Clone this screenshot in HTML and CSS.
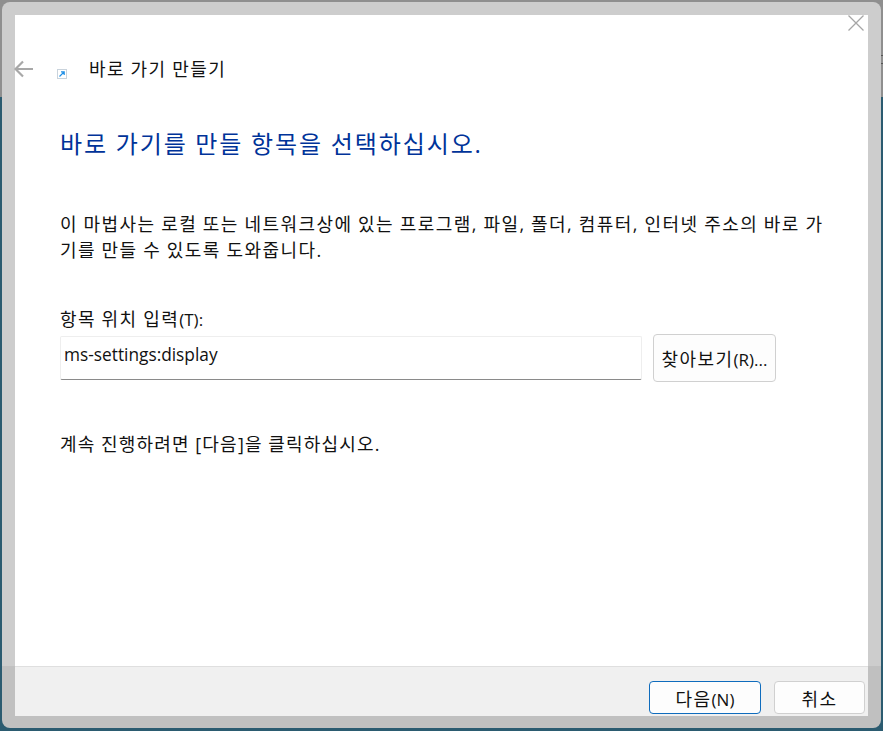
FILE: index.html
```html
<!DOCTYPE html>
<html lang="ko">
<head>
<meta charset="utf-8">
<title>바로 가기 만들기</title>
<link rel="stylesheet" href="styles.css">
</head>
<body>
<div class="frame">
  <div class="dialog">
    <button class="close" aria-label="닫기">
      <svg width="16" height="16" viewBox="0 0 16 16"><path d="M.5.5l15 15M15.5.5l-15 15" stroke="#a6a6a6" stroke-width="1.3" fill="none"/></svg>
    </button>
    <div class="titlebar">
      <svg class="back" width="19" height="18" viewBox="0 0 19 18"><path d="M19 9H1.5M9 1.5L1.5 9l7.5 7.5" stroke="#a8a8a8" stroke-width="2.2" fill="none"/></svg>
      <svg class="shortcut" width="10" height="10" viewBox="0 0 10 10"><rect x=".5" y=".5" width="9" height="9" fill="#fff" stroke="#c9d3dc"/><path d="M2.5 7.5L7 3M4 2.8h3.2V6" stroke="#1e8fe6" stroke-width="1.2" fill="none"/></svg>
      <span class="title">바로 가기 만들기</span>
    </div>
    <main class="content">
      <h1 class="heading">바로 가기를 만들 항목을 선택하십시오.</h1>
      <p class="intro">이 마법사는 로컬 또는 네트워크상에 있는 프로그램, 파일, 폴더, 컴퓨터, 인터넷 주소의 바로 가기를 만들 수 있도록 도와줍니다.</p>
      <label class="label">항목 위치 입력<span class="latin">(T):</span></label>
      <div class="field-row">
        <div class="input">ms-settings:display</div>
        <button class="btn browse">찾아보기<span class="latin">(R)...</span></button>
      </div>
      <p class="hint">계속 진행하려면 [다음]을 클릭하십시오.</p>
    </main>
    <footer class="footer">
      <button class="btn next">다음<span class="latin">(N)</span></button>
      <button class="btn cancel">취소</button>
    </footer>
  </div>
</div>
</body>
</html>
```
FILE: styles.css
```css
* { box-sizing: border-box; }
html, body { height: 100%; }
body {
  margin: 0;
  height: 731px;
  overflow: hidden;
  padding: 2px 2px 3px 2px;
  background:
    linear-gradient(transparent 55px, #555 55px, #555 56px, transparent 56px, transparent 63px, #555 63px, #555 64px, transparent 64px) right top / 2px 97px no-repeat,
    linear-gradient(#8f8f8f 0, #8f8f8f 97px, #2b5b70 97px, #2b5b70 100%);
  font-family: "Open Sans", "Noto Sans CJK KR", sans-serif;
  color: #111;
  font-size: 18px;
  letter-spacing: 1.44px;
  word-spacing: -0.5px;
}
.latin {
  font-family: "Open Sans", sans-serif;
  font-size: 17px;
  letter-spacing: 0;
  word-spacing: 0;
}
.frame {
  height: 726px;
  padding: 13px 13px 12px 13px;
  border-radius: 8px;
  background: linear-gradient(#cdcdcd 0, #cdcdcd 664px, #c0c0c0 664px, #c0c0c0 100%);
}
.dialog {
  position: relative;
  height: 701px;
  width: 853px;
  background: #fff;
  display: flex;
  flex-direction: column;
}
.close {
  position: absolute;
  top: 0;
  right: 4px;
  width: 16px;
  height: 16px;
  padding: 0;
  border: 0;
  background: none;
  display: block;
}
.close svg { display: block; }
.titlebar {
  display: flex;
  align-items: center;
  height: 108px;
  flex: none;
}
.back { margin-left: -1px; flex: none; }
.shortcut { margin: 9px 0 0 24px; flex: none; }
.title {
  margin-left: 22px;
  line-height: 24px;
}
.content {
  flex: 1;
  padding: 0 0 0 45px;
}
.heading {
  margin: 0;
  font-weight: 400;
  font-size: 24px;
  letter-spacing: 1.9px;
  word-spacing: -0.4px;
  line-height: 42px;
  color: #003399;
}
.intro {
  margin: 46px 0 0;
  width: 770px;
  line-height: 26px;
}
.label {
  display: block;
  margin-top: 44px;
  line-height: 24px;
}
.field-row {
  display: flex;
  align-items: center;
  margin-top: 2px;
}
.input {
  width: 582px;
  height: 44px;
  padding: 0 3px 6px;
  border: 1px solid #eeeeee;
  border-bottom: 1px solid #8a8a8a;
  border-radius: 2px;
  line-height: 36px;
  font-size: 17.3px;
  letter-spacing: 0;
}
.btn {
  font: inherit;
  letter-spacing: inherit;
  color: inherit;
  background: #fdfdfd;
  border: 1px solid #d0d0d0;
  border-radius: 4px;
  padding: 0;
}
.browse {
  margin-left: 11px;
  width: 123px;
  height: 48px;
}
.hint {
  margin: 50px 0 0;
  line-height: 24px;
  letter-spacing: 1.2px;
  word-spacing: -0.4px;
}
.footer {
  flex: none;
  height: 50px;
  background: #f0f0f0;
  border-top: 1px solid #dfdfdf;
  display: flex;
  justify-content: flex-end;
  align-items: flex-end;
  gap: 13px;
  padding: 0 3px 2px 0;
}
.next { width: 112px; height: 33px; border-color: #0f6cbd; }
.cancel { width: 91px; height: 33px; }
```
